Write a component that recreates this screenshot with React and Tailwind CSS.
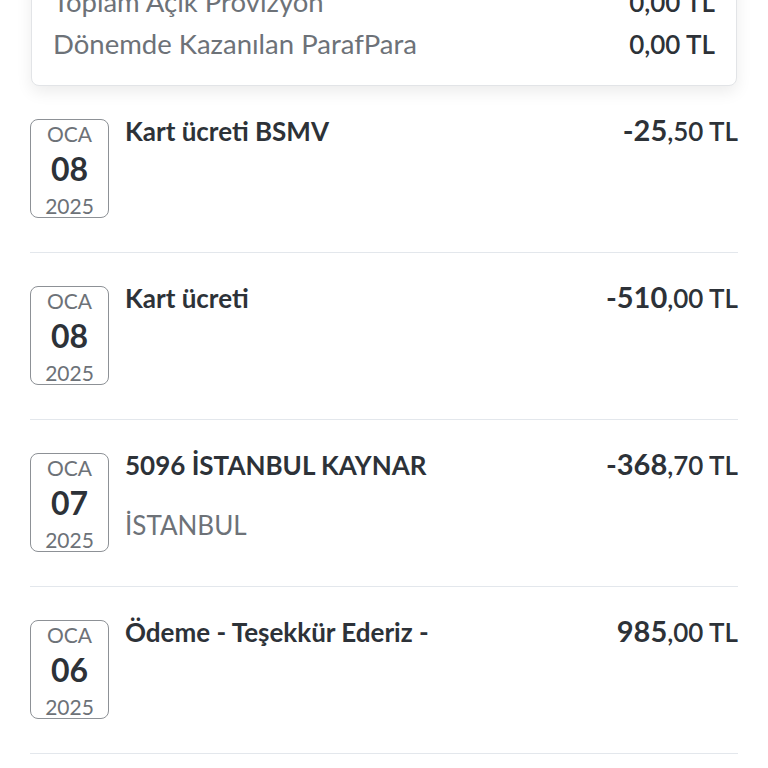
import React from 'react';

const summary = [
  { label: 'Toplam Açık Provizyon', value: '0,00 TL' },
  { label: 'Dönemde Kazanılan ParafPara', value: '0,00 TL' },
];

const transactions = [
  { month: 'OCA', day: '08', year: '2025', title: 'Kart ücreti BSMV', whole: '-25', cents: ',50 TL' },
  { month: 'OCA', day: '08', year: '2025', title: 'Kart ücreti', whole: '-510', cents: ',00 TL' },
  { month: 'OCA', day: '07', year: '2025', title: '5096 İSTANBUL KAYNAR', sub: 'İSTANBUL', whole: '-368', cents: ',70 TL' },
  { month: 'OCA', day: '06', year: '2025', title: 'Ödeme - Teşekkür Ederiz -', whole: '985', cents: ',00 TL' },
];

const DateBox = ({ month, day, year }) => (
  <div className="w-[79px] h-[99px] shrink-0 border border-[#8d9196] rounded-lg flex flex-col items-center justify-between pt-[1px] pb-0">
    <span className="text-[21px] leading-[26px] text-[#6d7278]">{month}</span>
    <span className="text-[32px] leading-[34px] font-bold text-[#2d3238]">{day}</span>
    <span className="text-[21px] leading-[26px] text-[#6d7278] translate-y-[2px]">{year}</span>
  </div>
);

export default function App() {
  return (
    <div className="w-[768px] h-[768px] overflow-hidden bg-white px-[30px] font-['Lato',sans-serif]">
      <div className="-mt-[30px] mx-[1px] bg-white border border-[#e2e4e7] rounded-lg shadow-[0_6px_16px_rgba(0,0,0,0.08)] px-[21px] pt-[18px] pb-[28px] flex flex-col gap-[16px]">
        {summary.map(s => (
          <div key={s.label} className="flex justify-between items-center h-[26px]">
            <span className="text-[27.5px] text-[#6d7278]">{s.label}</span>
            <span className="text-[26px] font-semibold text-[#2d3238]">{s.value}</span>
          </div>
        ))}
      </div>

      <div className="mt-[33px]">
        {transactions.map((t, i) => (
          <div key={i} className="pb-[34px] mb-[33px] border-b border-[#e3e7ec] flex gap-[16px]">
            <DateBox month={t.month} day={t.day} year={t.year} />
            <div className="flex-1 flex justify-between">
              <div className="flex flex-col">
                <span className="text-[26px] leading-[26px] font-bold text-[#2d3238] mt-[-1px]">{t.title}</span>
                {t.sub && <span className="text-[26px] leading-[26px] text-[#6d7278] mt-[34px]">{t.sub}</span>}
              </div>
              <div className="text-[26px] leading-[26px] text-[#2d3238] mt-[-2px]">
                <span className="font-bold text-[29px]">{t.whole}</span>
                <span className="font-semibold">{t.cents}</span>
              </div>
            </div>
          </div>
        ))}
      </div>
    </div>
  );
}
